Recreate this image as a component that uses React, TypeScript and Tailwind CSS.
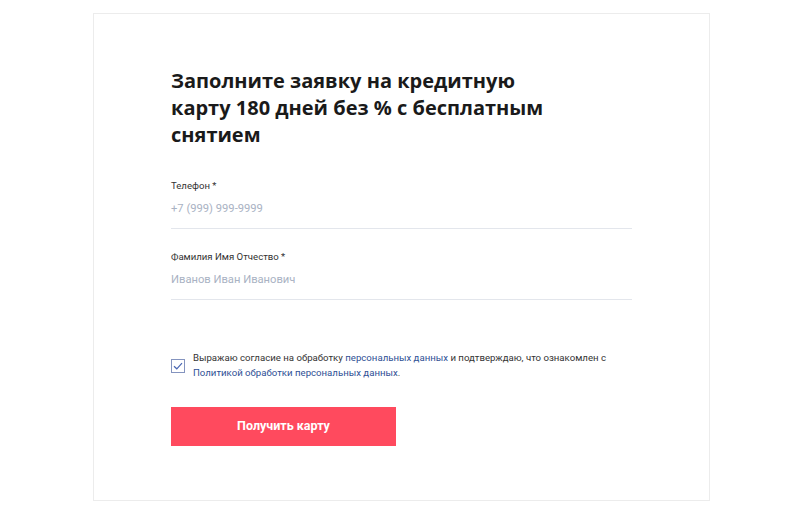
import React from "react";

export default function App() {
  return (
    <div className="w-[800px] h-[509px] bg-white pt-[13px] pl-[93px]" style={{ fontFamily: "Roboto, 'Liberation Sans', sans-serif" }}>
      <div className="w-[617px] h-[488px] border border-[#ececec] pl-[77px] pr-[77px] pt-[53px]">
        <h1 className="text-[20px] leading-[27px] font-bold text-[#1a1a1a]" style={{ fontFamily: "'Open Sans', sans-serif" }}>
          Заполните заявку на кредитную
          <br />
          карту 180 дней без % с бесплатным
          <br />
          снятием
        </h1>
        <div className="mt-[31px]">
          <div className="text-[9.6px] leading-[14px] text-[#333]">Телефон *</div>
          <div className="mt-[6px] pb-[9px] border-b border-[#e3e6ec] text-[11.2px] leading-[20px] text-[#a9b2c3]">+7 (999) 999-9999</div>
        </div>
        <div className="mt-[21px]">
          <div className="text-[9.6px] leading-[14px] text-[#333]">Фамилия Имя Отчество *</div>
          <div className="mt-[6px] pb-[9px] border-b border-[#e3e6ec] text-[11.2px] leading-[20px] text-[#a9b2c3]">Иванов Иван Иванович</div>
        </div>
        <div className="mt-[50px] flex items-start">
          <div className="mt-[9px] w-[14px] h-[14px] border border-[#8494bf] flex items-center justify-center shrink-0">
            <svg width="10" height="8" viewBox="0 0 10 8" fill="none">
              <path d="M1 4.2 L3.8 6.8 L9 1.2" stroke="#4a67b3" strokeWidth="1.2" />
            </svg>
          </div>
          <p className="ml-[8px] text-[9.65px] leading-[15px] text-[#333] whitespace-nowrap">
            Выражаю согласие на обработку <span className="text-[#2e4f95]">персональных данных</span> и подтверждаю, что ознакомлен с
            <br />
            <span className="text-[#2e4f95]">Политикой обработки персональных данных</span>.
          </p>
        </div>
        <button className="mt-[27px] w-[225px] h-[39px] bg-[#ff4a5e] text-white text-[12.5px] font-bold">
          Получить карту
        </button>
      </div>
    </div>
  );
}
